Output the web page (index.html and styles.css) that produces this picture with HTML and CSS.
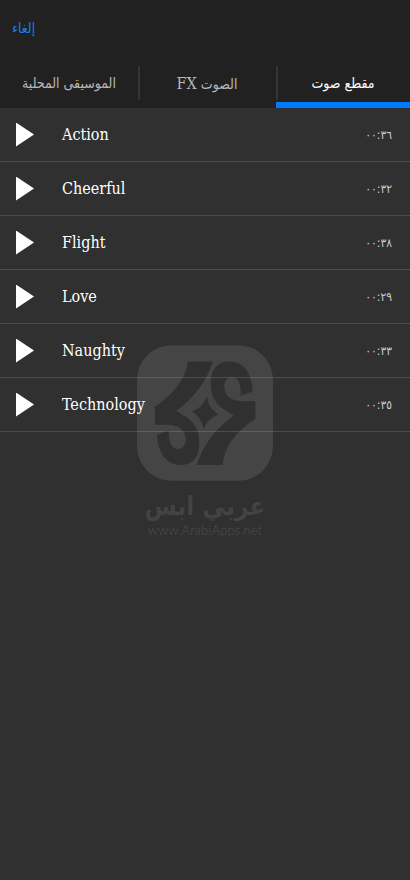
FILE: index.html
```html
<!DOCTYPE html>
<html lang="ar">
<head>
    <meta charset="UTF-8">
    <meta name="viewport" content="width=device-width, initial-scale=1">
    <title>مقطع صوت</title>
    <link rel="stylesheet" href="styles.css">
</head>
<body>
    <header class="top-bar">
        <button class="cancel-btn" type="button">إلغاء</button>
        <nav class="tabs">
            <button class="tab" type="button"><span dir="rtl">الموسيقى المحلية</span></button>
            <button class="tab" type="button"><span dir="rtl">الصوت <span class="latin">FX</span></span></button>
            <button class="tab active" type="button"><span dir="rtl">مقطع صوت</span></button>
        </nav>
    </header>
    <main>
        <ul class="track-list">
            <li class="track">
                <button class="play-btn" type="button" aria-label="Play Action"></button>
                <span class="name">Action</span>
                <span class="time">٠٠:٣٦</span>
            </li>
            <li class="track">
                <button class="play-btn" type="button" aria-label="Play Cheerful"></button>
                <span class="name">Cheerful</span>
                <span class="time">٠٠:٣٢</span>
            </li>
            <li class="track">
                <button class="play-btn" type="button" aria-label="Play Flight"></button>
                <span class="name">Flight</span>
                <span class="time">٠٠:٣٨</span>
            </li>
            <li class="track">
                <button class="play-btn" type="button" aria-label="Play Love"></button>
                <span class="name">Love</span>
                <span class="time">٠٠:٢٩</span>
            </li>
            <li class="track">
                <button class="play-btn" type="button" aria-label="Play Naughty"></button>
                <span class="name">Naughty</span>
                <span class="time">٠٠:٣٣</span>
            </li>
            <li class="track">
                <button class="play-btn" type="button" aria-label="Play Technology"></button>
                <span class="name">Technology</span>
                <span class="time">٠٠:٣٥</span>
            </li>
        </ul>
    </main>
    <!-- Watermark over the list -->
    <div class="watermark">
        <svg class="watermark-logo" viewBox="21 29 410 409" aria-hidden="true">
            <path fill-rule="evenodd" d="M126 29H326A105 105 0 0 1 431 134V333A105 105 0 0 1 326 438H126A105 105 0 0 1 21 333V134A105 105 0 0 1 126 29Z
                M174 78H250Q220 168 139 227L177 251Q209 276 209 322C209 368 190 390 155 390C107 390 84 352 81 299L117 286C115 322 127 342 146 342C160 342 168 330 168 313C168 287 147 269 112 269H75V215Q168 150 174 78Z
                M378 198V251Q286 310 279 390H201Q230 300 313 241L274 216Q243 190 243 145C243 100 265 78 300 78C345 78 367 115 370 168L333 182C337 145 325 126 306 126C292 126 284 138 284 155C284 180 305 198 340 198Z
                M231 183Q236 219 266 238Q232 251 222 282Q215 243 186 229Q222 216 231 183Z"/>
        </svg>
        <div class="watermark-name" dir="rtl">عربي ابس</div>
        <div class="watermark-url">www.ArabiApps.net</div>
    </div>
</body>
</html>
```

FILE: styles.css
```css
* {
    box-sizing: border-box;
}
body {
    margin: 0;
    min-height: 100vh;
    position: relative;
    background: #303030;
    color: #fff;
    font-family: "DejaVu Serif Condensed", "DejaVu Serif", serif;
}
button {
    padding: 0;
    border: 0;
    background: none;
    color: inherit;
    font: inherit;
    cursor: pointer;
}
.top-bar {
    background: #212121;
}
.cancel-btn {
    display: block;
    height: 56px;
    margin-bottom: 10px;
    padding: 0 12px;
    color: #1480f4;
    font-family: "DejaVu Sans Condensed", "DejaVu Sans", sans-serif;
    font-size: 14px;
}
.tabs {
    display: grid;
    grid-template-columns: 34fr 34fr 33fr;
}
.tab {
    position: relative;
    height: 42px;
    padding-bottom: 8px;
    color: #b8b8b8;
    font-family: "DejaVu Sans Condensed", "DejaVu Sans", sans-serif;
    font-size: 14px;
}
.tab + .tab::before {
    content: "";
    position: absolute;
    left: 0;
    top: 0;
    width: 2px;
    height: 34px;
    background: #353535;
}
.tab.active {
    color: #fff;
}
.tab.active::after {
    content: "";
    position: absolute;
    left: 0;
    right: 0;
    bottom: 0;
    height: 6px;
    background: #007aff;
}
.latin {
    font-family: "DejaVu Serif Condensed", "DejaVu Serif", serif;
    font-size: 16px;
}
.track-list {
    margin: 0;
    padding: 0;
    list-style: none;
}
.track {
    display: flex;
    align-items: center;
    height: 54px;
    padding: 0 18px 0 16px;
    border-bottom: 1px solid #4d4d4d;
}
.play-btn {
    width: 18px;
    height: 24px;
    margin-right: 28px;
    background: #fff;
    clip-path: polygon(0 0, 100% 50%, 0 100%);
}
.name {
    flex: 1;
    font-size: 16px;
}
.time {
    color: #ccc;
    font-family: "DejaVu Sans Condensed", "DejaVu Sans", sans-serif;
    font-size: 12px;
}
.watermark {
    position: absolute;
    top: 345px;
    left: 0;
    right: 0;
    text-align: center;
    color: rgba(255, 255, 255, 0.1);
    pointer-events: none;
}
.watermark-logo {
    display: block;
    width: 136px;
    height: 136px;
    margin: 0 auto 8px;
    fill: currentColor;
}
.watermark-name {
    font-family: "DejaVu Sans Condensed", "DejaVu Sans", sans-serif;
    font-size: 26px;
    font-weight: bold;
    line-height: 34px;
}
.watermark-url {
    font-family: Lato, sans-serif;
    font-size: 13px;
    line-height: 14px;
}
```
